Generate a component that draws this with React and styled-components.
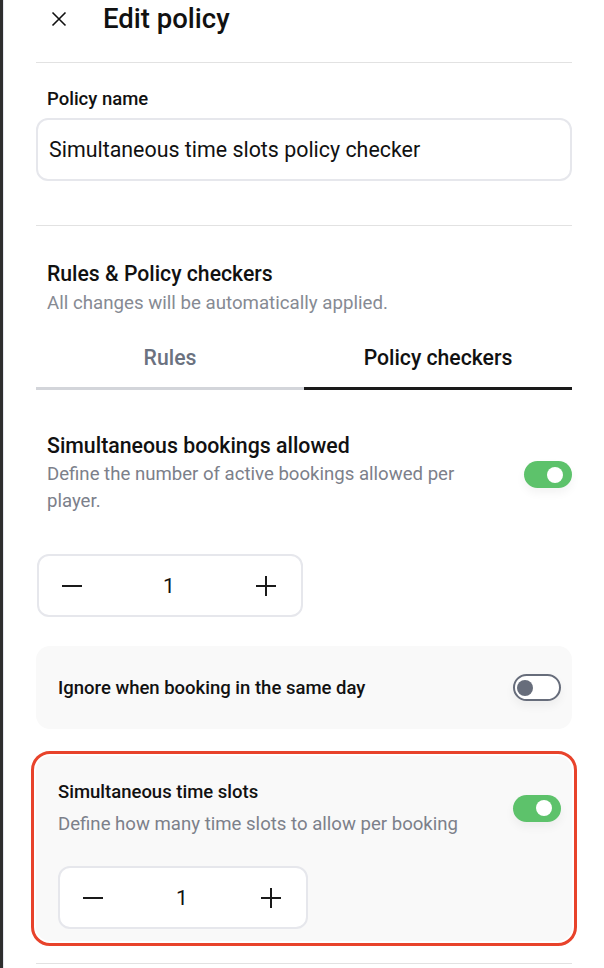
import React from "react";
import styled, { createGlobalStyle } from "styled-components";

const Global = createGlobalStyle`
  html, body { margin: 0; padding: 0; background: #fff; }
  body { font-family: Roboto, "Liberation Sans", Arial, sans-serif; color: #111; -webkit-font-smoothing: antialiased; }
  * { box-sizing: border-box; }
`;

const Page = styled.div`
  display: flex;
  min-height: 968px;
  width: 604px;
  overflow: hidden;
`;

const Edge = styled.div`
  width: 4px;
  flex: none;
  background: #2e2e2e;
  border-right: 1px solid #e4e6ee;
`;

const Panel = styled.main`
  flex: 1;
  padding: 0 32px 0 32px;
  display: flex;
  flex-direction: column;
`;

const Header = styled.header`
  height: 38px;
  display: flex;
  align-items: center;
  gap: 36px;
  padding-left: 15px;
`;

const CloseBtn = styled.button`
  border: none;
  background: none;
  padding: 0;
  width: 16px;
  height: 16px;
  display: flex;
  color: #111;
`;

const Title = styled.h1`
  margin: 0;
  font-size: 27.5px;
  font-weight: 500;
  line-height: 38px;
`;

const Divider = styled.hr`
  border: none;
  height: 1px;
  background: #e2e2e2;
  margin: ${(p) => p.$mt || 0}px 0 0;
`;

const Label = styled.label`
  margin-top: 26px;
  padding-left: 11px;
  font-size: 18.5px;
  font-weight: 500;
  line-height: 20px;
`;

const Input = styled.div`
  margin-top: 9px;
  height: 63px;
  border: 2px solid #e6e7ec;
  border-radius: 12px;
  display: flex;
  align-items: center;
  padding-left: 11px;
  font-size: 21.4px;
  color: #111;
`;

const SectionHead = styled.div`
  margin-top: 36px;
  padding-left: 11px;
  display: flex;
  flex-direction: column;
  gap: 5px;
`;

const H2 = styled.h2`
  margin: 0;
  font-size: 21.2px;
  font-weight: 500;
  line-height: 24px;
`;

const Sub = styled.p`
  margin: 0;
  font-size: 18.7px;
  line-height: 24px;
  color: #868a93;
`;

const Tabs = styled.div`
  margin-top: 31px;
  display: grid;
  grid-template-columns: 1fr 1fr;
`;

const Tab = styled.div`
  text-align: center;
  font-size: 21.2px;
  font-weight: 500;
  line-height: 24px;
  padding-bottom: 17px;
  color: ${(p) => (p.$active ? "#111" : "#6b7280")};
  border-bottom: 3px solid ${(p) => (p.$active ? "#1a1a1a" : "#d3d5da")};
`;

const Row = styled.div`
  display: flex;
  align-items: center;
  justify-content: space-between;
  gap: 24px;
`;

const Setting = styled.section`
  margin-top: 44px;
  display: flex;
  flex-direction: column;
`;

const SettingRow = styled(Row)`
  padding-left: 11px;
`;

const TextCol = styled.div`
  display: flex;
  flex-direction: column;
  gap: ${(p) => p.$gap || 3}px;
  max-width: 430px;
`;

const SettingTitle = styled.div`
  font-size: ${(p) => (p.$small ? 18.5 : 21.3)}px;
  font-weight: 500;
  line-height: ${(p) => (p.$small ? 22 : 24)}px;
  color: #111;
`;

const Desc = styled.div`
  font-size: 18.6px;
  line-height: ${(p) => p.$lh || 27}px;
  color: #7c808a;
`;

const Toggle = styled.div`
  flex: none;
  width: 48px;
  height: 27px;
  border-radius: 14px;
  position: relative;
  background: ${(p) => (p.$on ? "#5dc26b" : "#fff")};
  border: ${(p) => (p.$on ? "none" : "2px solid #676d7b")};
  box-shadow: 0 5px 10px rgba(0, 0, 0, 0.05);
  &::after {
    content: "";
    position: absolute;
    width: 16px;
    height: 16px;
    border-radius: 50%;
    top: ${(p) => (p.$on ? 5.5 : 3.5)}px;
    ${(p) => (p.$on ? "right: 9px;" : "left: 2px;")}
    background: ${(p) => (p.$on ? "#fff" : "#676d7b")};
  }
`;

const Stepper = styled.div`
  margin-top: ${(p) => p.$mt || 0}px;
  margin-left: ${(p) => p.$ml || 0}px;
  width: ${(p) => p.$w}px;
  height: 63px;
  background: #fff;
  border: 2px solid #e6e7ec;
  border-radius: 12px;
  display: flex;
  align-items: center;
  justify-content: space-between;
  padding: 0 24px 0 22px;
`;

const StepBtn = styled.button`
  border: none;
  background: none;
  padding: 0;
  width: 22px;
  height: 22px;
  display: flex;
  align-items: center;
  justify-content: center;
  color: #1a1a1a;
`;

const Value = styled.span`
  font-size: 21px;
  color: #111;
`;

const Card = styled.div`
  margin-top: ${(p) => p.$mt}px;
  background: #f9f9f9;
  border-radius: 14px;
  display: flex;
  flex-direction: column;
  padding: ${(p) => p.$pad};
  ${(p) => p.$highlight && `outline: 3px solid #e8432b; outline-offset: 2px;`}
`;

const CardRow = styled(Row)`
  height: 83px;
  padding: 0 11px 0 22px;
`;

const Minus = () => (
  <svg width="22" height="22" viewBox="0 0 22 22">
    <path d="M1 11h20" stroke="currentColor" strokeWidth="2" />
  </svg>
);
const Plus = () => (
  <svg width="22" height="22" viewBox="0 0 22 22">
    <path d="M1 11h20M11 1v20" stroke="currentColor" strokeWidth="2" />
  </svg>
);

const NumberStepper = ({ width, mt, ml, value }) => (
  <Stepper $w={width} $mt={mt} $ml={ml}>
    <StepBtn aria-label="decrease"><Minus /></StepBtn>
    <Value>{value}</Value>
    <StepBtn aria-label="increase"><Plus /></StepBtn>
  </Stepper>
);

export default function App() {
  return (
    <>
      <Global />
      <Page>
        <Edge />
        <Panel>
          <Header>
            <CloseBtn aria-label="close">
              <svg width="16" height="16" viewBox="0 0 16 16">
                <path d="M1.5 1.5l13 13M14.5 1.5l-13 13" stroke="currentColor" strokeWidth="1.6" />
              </svg>
            </CloseBtn>
            <Title>Edit policy</Title>
          </Header>
          <Divider $mt={24} />
          <Label>Policy name</Label>
          <Input>Simultaneous time slots policy checker</Input>
          <Divider $mt={44} />
          <SectionHead>
            <H2>Rules &amp; Policy checkers</H2>
            <Sub>All changes will be automatically applied.</Sub>
          </SectionHead>
          <Tabs>
            <Tab>Rules</Tab>
            <Tab $active>Policy checkers</Tab>
          </Tabs>
          <Setting>
            <SettingRow>
              <TextCol>
                <SettingTitle>Simultaneous bookings allowed</SettingTitle>
                <Desc>Define the number of active bookings allowed per player.</Desc>
              </TextCol>
              <Toggle $on />
            </SettingRow>
            <NumberStepper width={266} ml={1} mt={39} value={1} />
          </Setting>
          <Card $mt={29} $pad="0">
            <CardRow>
              <SettingTitle $small>Ignore when booking in the same day</SettingTitle>
              <Toggle />
            </CardRow>
          </Card>
          <Card $mt={27} $pad="25px 11px 12px 22px" $highlight>
            <Row>
              <TextCol $gap={10}>
                <SettingTitle $small>Simultaneous time slots</SettingTitle>
                <Desc $lh={22}>Define how many time slots to allow per booking</Desc>
              </TextCol>
              <Toggle $on />
            </Row>
            <NumberStepper width={250} mt={31} value={1} />
          </Card>
          <Divider $mt={22} />
        </Panel>
      </Page>
    </>
  );
}
